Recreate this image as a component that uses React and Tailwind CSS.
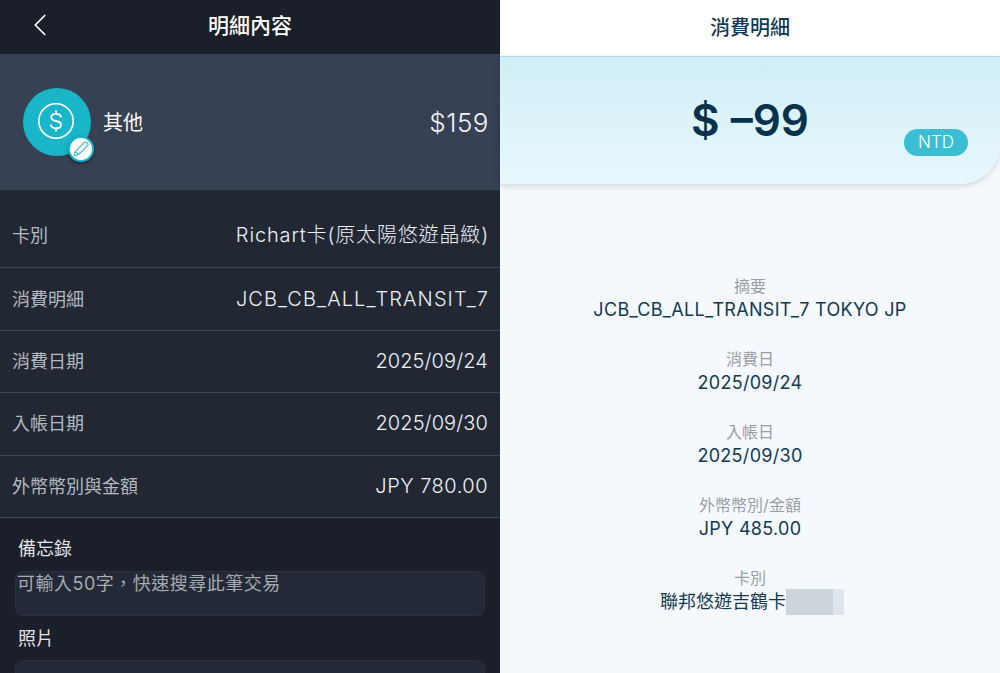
import { ChevronLeft } from 'lucide-react';

const sans = '[font-family:Inter,"Noto_Sans_CJK_TC",sans-serif]';

const rows = [
    { label: '卡別', value: 'Richart卡(原太陽悠遊晶緻)', cls: 'h-[78px] pt-[13px]', track: 'tracking-[0.85px]' },
    { label: '消費明細', value: 'JCB_CB_ALL_TRANSIT_7', cls: 'h-[63px]', track: 'tracking-[1.1px]' },
    { label: '消費日期', value: '2025/09/24', cls: 'h-[62px] pb-[2px]', track: 'tracking-[0.1px] -translate-x-[1px]' },
    { label: '入帳日期', value: '2025/09/30', cls: 'h-[63px] pb-[2px]', track: 'tracking-[0.1px] -translate-x-[1px]' },
    { label: '外幣幣別與金額', value: 'JPY 780.00', cls: 'h-[62px] pb-[2px]', track: 'tracking-[0.5px] -translate-x-[1px]' },
];

const details = [
    { label: '摘要', value: 'JCB_CB_ALL_TRANSIT_7 TOKYO JP' },
    { label: '消費日', value: '2025/09/24' },
    { label: '入帳日', value: '2025/09/30' },
    { label: '外幣幣別/金額', value: 'JPY 485.00' },
];

function CategoryIcon() {
    return (
        <div className="relative w-[68px] h-[68px] rounded-full bg-[#19b5c9] flex items-center justify-center shrink-0">
            <svg width="38" height="38" viewBox="0 0 38 38" fill="none" stroke="white" className="-mt-[2px] -ml-[2px]">
                <circle cx="19" cy="19" r="17.2" strokeWidth="1.6" />
                <path d="M24 14.6c-.7-1.7-2.6-2.8-5-2.8-2.8 0-4.8 1.4-4.8 3.6 0 2.2 2 3 4.8 3.6 2.9.6 5 1.5 5 3.7 0 2.2-2.1 3.6-5 3.6-2.5 0-4.5-1.1-5.2-3M19 9.2v2.6M19 26.1v2.7" strokeWidth="1.8" strokeLinecap="round" />
            </svg>
            <div className="absolute left-[45px] top-[48px] w-[26px] h-[26px] rounded-full bg-white border-2 border-[#19b5c9] flex items-center justify-center shadow-[0_2px_4px_rgba(0,0,0,0.35)]">
                <svg width="18" height="18" viewBox="0 0 18 18" fill="none" stroke="#3fb4c4" strokeWidth="1.1" strokeLinejoin="round">
                    <path d="M2.2 15.8l1-4.2L12.4 2.4a1.5 1.5 0 0 1 2.1 0l1.1 1.1a1.5 1.5 0 0 1 0 2.1L6.4 14.8l-4.2 1z" />
                    <path d="M3.2 11.6l3.2 3.2" />
                </svg>
            </div>
        </div>
    );
}

export default function App() {
    return (
        <div className={`flex w-[1000px] h-[673px] overflow-hidden ${sans}`}>
            <div className="w-[500px] bg-[#1b1f29] flex flex-col">
                <div className="h-[54px] shrink-0 relative flex items-center justify-center">
                    <ChevronLeft className="absolute left-[21px] top-[6px] text-white" size={38} strokeWidth={1.1} />
                    <span className="text-white text-[21px] font-medium -mt-[3px]">明細內容</span>
                </div>
                <div className="h-[136px] shrink-0 bg-[#374154] flex items-center pl-[23px] pr-[11px]">
                    <CategoryIcon />
                    <span className="ml-[12px] text-[20px] text-white mt-[2px]">其他</span>
                    <span className="ml-auto text-[26px] text-[#f2f4f7] font-light tracking-[0.5px]">$159</span>
                </div>
                <div className="bg-[#222833]">
                    {rows.map((row) => (
                        <div key={row.label} className={`flex items-center justify-between pl-[12px] pr-[11px] border-b border-[#3d4859] ${row.cls}`}>
                            <span className="text-[18px] text-[#b4b8bf] mt-[1px]">{row.label}</span>
                            <span className={`text-[20px] font-light text-[#eef0f3] ${row.track}`}>{row.value}</span>
                        </div>
                    ))}
                </div>
                <div className="px-[15px] pt-[19px]">
                    <div className="pl-[3px] text-[18px] leading-[24px] text-[#e3e5e8]">備忘錄</div>
                    <div className="mt-[10px] h-[45px] rounded-[8px] bg-[#232936] border border-[#2a303c] pl-[1px] text-[18px] leading-[24px] tracking-[0.5px] text-[#a6aab1]">可輸入50字，快速搜尋此筆交易</div>
                    <div className="mt-[11px] pl-[3px] text-[18px] leading-[24px] text-[#e3e5e8]">照片</div>
                    <div className="mt-[9px] h-[45px] rounded-[8px] bg-[#232936] border border-[#2a303c]"></div>
                </div>
            </div>
            <div className="w-[500px] bg-[#f5f9fe] flex flex-col">
                <div className="h-[56px] shrink-0 bg-white flex items-center justify-center">
                    <span className="text-[20px] font-medium text-[#123a52]">消費明細</span>
                </div>
                <div className="relative h-[128px] shrink-0 rounded-br-[40px] bg-gradient-to-b from-[#d1eff6] to-[#e8f7fe] border-t border-[#b8d8e2] shadow-[0_2px_6px_rgba(0,0,0,0.15)] flex justify-center">
                    <span className="mt-[36px] text-[44px] leading-[54px] font-semibold text-[#06324b]">$ –99</span>
                    <span className="absolute right-[32px] top-[72px] w-[64px] h-[27px] rounded-full bg-[#3bbdd4] text-white text-[17px] font-light flex items-center justify-center">NTD</span>
                </div>
                <div className="pt-[90px] flex flex-col items-center">
                    {details.map((item) => (
                        <div key={item.label} className="h-[73px] flex flex-col items-center">
                            <span className="text-[16px] leading-[24px] text-[#9a9ea3]">{item.label}</span>
                            <span className="text-[18px] leading-[24px] tracking-[0.3px] text-[#123a52]">{item.value}</span>
                        </div>
                    ))}
                    <div className="flex flex-col items-center">
                        <span className="text-[16px] leading-[24px] text-[#9a9ea3]">卡別</span>
                        <div className="flex items-center h-[24px] ml-[4px] text-[18px] leading-[24px] text-[#123a52]">
                            聯邦悠遊吉鶴卡
                            <span className="w-[47px] h-[26px] bg-[#cdd5dc]"></span>
                            <span className="w-[11px] h-[26px] bg-[#dfe5ea]"></span>
                        </div>
                    </div>
                </div>
            </div>
        </div>
    );
}
